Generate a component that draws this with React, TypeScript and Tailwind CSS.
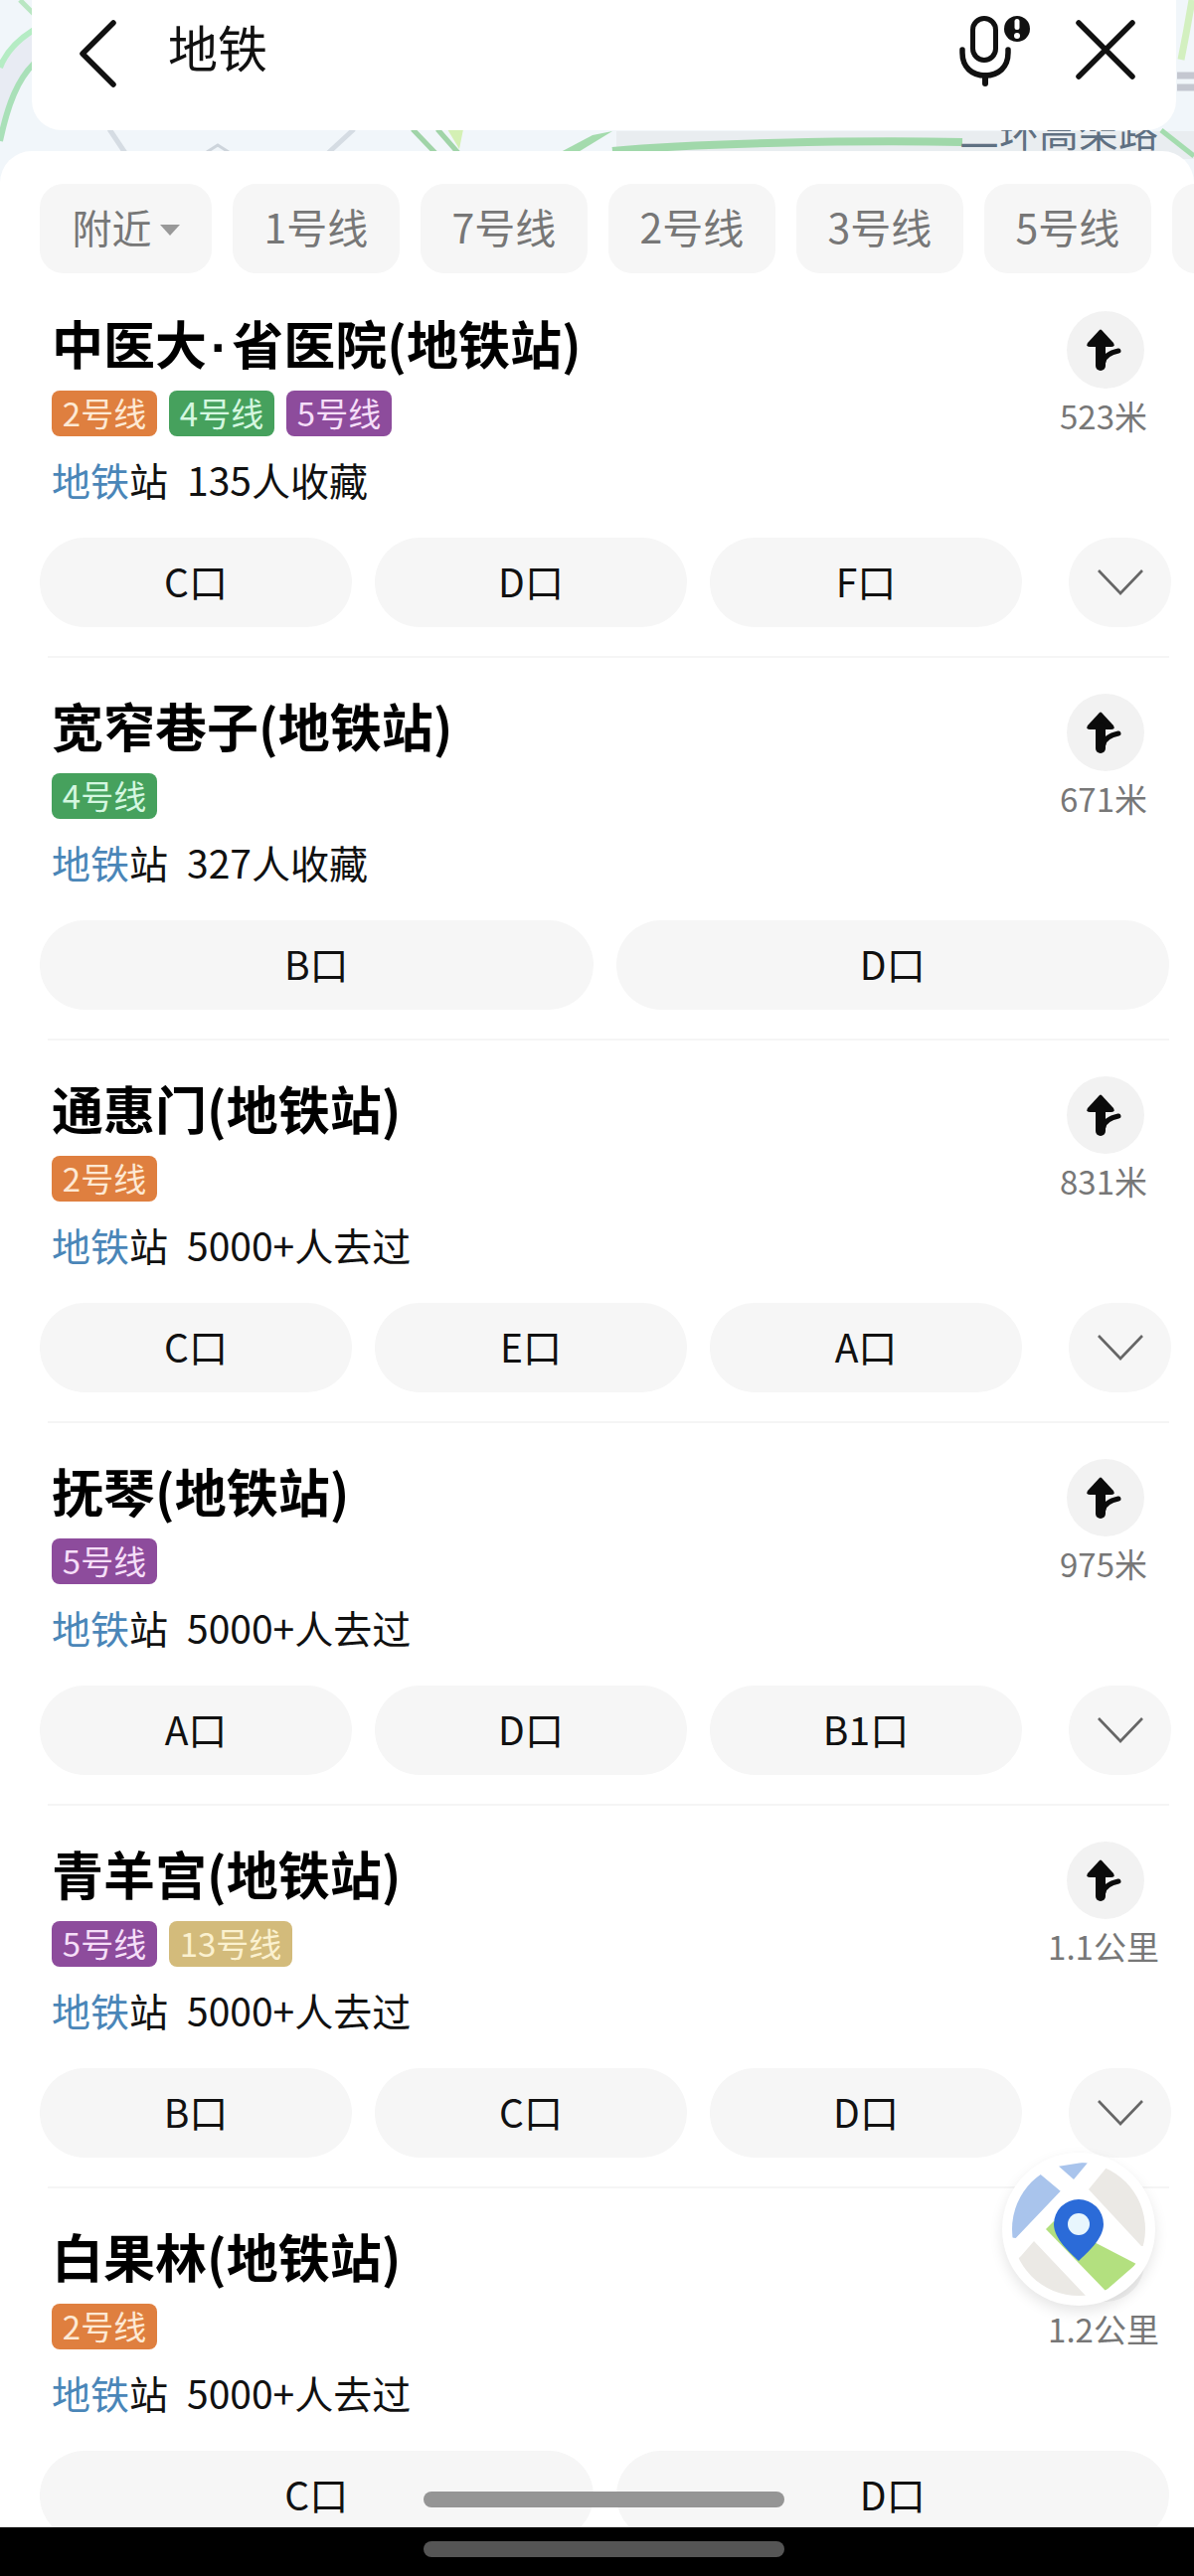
const FONT = "font-['Noto_Sans_CJK_SC','Noto_Sans',sans-serif]";

const LINE: Record<string, string> = {
  "2号线": "bg-[#df7f3f] text-[#fde9d4]",
  "4号线": "bg-[#46a15d] text-[#d4f7e0]",
  "5号线": "bg-[#8d4c9c] text-[#f5def8]",
  "13号线": "bg-[#d3bb7b] text-[#fbf1cf]",
};

type Station = {
  name: string;
  lines: string[];
  meta: string;
  dist: string;
  exits: string[];
  more: boolean;
};

const STATIONS: Station[] = [
  { name: "中医大·省医院(地铁站)", lines: ["2号线", "4号线", "5号线"], meta: "135人收藏", dist: "523米", exits: ["C口", "D口", "F口"], more: true },
  { name: "宽窄巷子(地铁站)", lines: ["4号线"], meta: "327人收藏", dist: "671米", exits: ["B口", "D口"], more: false },
  { name: "通惠门(地铁站)", lines: ["2号线"], meta: "5000+人去过", dist: "831米", exits: ["C口", "E口", "A口"], more: true },
  { name: "抚琴(地铁站)", lines: ["5号线"], meta: "5000+人去过", dist: "975米", exits: ["A口", "D口", "B1口"], more: true },
  { name: "青羊宫(地铁站)", lines: ["5号线", "13号线"], meta: "5000+人去过", dist: "1.1公里", exits: ["B口", "C口", "D口"], more: true },
  { name: "白果林(地铁站)", lines: ["2号线"], meta: "5000+人去过", dist: "1.2公里", exits: ["C口", "D口"], more: false },
];

function MapBackdrop() {
  return (
    <svg className="absolute left-0 top-0" width="1201" height="200" viewBox="0 0 1201 200" fill="none">
      <rect width="1201" height="200" fill="#f1f6fa" />
      <path d="M0 65 L33 30 V65 L15 90 L0 140Z" fill="#e8ebf3" />
      <path d="M620 132 H1201 V160 H620Z" fill="#e9edf0" />
      <path d="M20 0 L34 14" stroke="#b9e6c2" strokeWidth="5" />
      <path d="M34 30 C18 40 6 52 0 68" stroke="#b5ecc4" strokeWidth="6" />
      <path d="M34 64 C18 80 8 104 0 142" stroke="#a9e0b8" strokeWidth="6" />
      <path d="M110 130 L126 154 M356 130 L330 154" stroke="#d5dce3" strokeWidth="5" />
      <path d="M208 153 L219 146 L230 153" stroke="#cdd4db" strokeWidth="3" />
      <path d="M415 130 L438 154 M440 130 L461 154" stroke="#a0d4a8" strokeWidth="5" />
      <path d="M450 130 L466 130 L462 150Z" fill="#d4f0b4" />
      <path d="M616 132 L596 136 L562 154 L580 154 Z" fill="#a4dbad" />
      <path d="M616 152 C700 144 860 141 968 143" stroke="#a0d8aa" strokeWidth="8" />
      <path d="M1168 131 L1201 157" stroke="#a4dcae" strokeWidth="5" />
      <path d="M1188 60 C1192 40 1196 18 1199 0" stroke="#d3f0c0" strokeWidth="7" />
      <path d="M1184 76 H1201 M1184 88 H1201" stroke="#c4c7d0" strokeWidth="7" />
    </svg>
  );
}

function MicIcon() {
  return (
    <svg width="72" height="76" viewBox="0 0 72 76" fill="none">
      <rect x="13.5" y="6.5" width="23" height="42" rx="11.5" stroke="#111" strokeWidth="5" />
      <path d="M3 38 V41 C3 56 13 64 26 64 C39 64 49 56 49 41 V38" stroke="#111" strokeWidth="5.5" strokeLinecap="round" />
      <path d="M26 64 V72" stroke="#111" strokeWidth="6" strokeLinecap="round" />
      <circle cx="58" cy="17" r="13" fill="#111" />
      <rect x="55.5" y="7" width="5" height="11" rx="2.5" fill="#fff" />
      <circle cx="58" cy="24" r="3" fill="#fff" />
    </svg>
  );
}

function TurnIcon() {
  return (
    <svg width="36" height="44" viewBox="0 0 36 44" fill="none" className="-ml-[3px]">
      <path d="M13 2 Q14 1 15 2 L27 15 Q29 19 25 19 H3 Q-1 19 1 15 Z" fill="#0b0b0b" />
      <path d="M14 17 V38" stroke="#0b0b0b" strokeWidth="10" strokeLinecap="round" />
      <path d="M17 34 C18 28 23 25 32 23" stroke="#0b0b0b" strokeWidth="5" strokeLinecap="round" />
    </svg>
  );
}

function Chevron() {
  return (
    <svg width="48" height="28" viewBox="0 0 48 28" fill="none">
      <path d="M2 2 L24 25 L46 2" stroke="#666" strokeWidth="2.6" />
    </svg>
  );
}

function MapFab() {
  return (
    <div className="absolute left-[1008px] top-[2166px] flex h-[154px] w-[154px] items-center justify-center rounded-full bg-white shadow-[0_6px_14px_rgba(0,0,0,0.10)]">
      <svg width="136" height="136" viewBox="0 0 136 136">
        <defs>
          <clipPath id="fab-clip">
            <circle cx="68" cy="68" r="67" />
          </clipPath>
        </defs>
        <g clipPath="url(#fab-clip)">
          <path d="M-2 76 L29.7 13 L49.7 29.7 L4.7 77 Z M-2 76 L0 0 L30 0 L29.7 13 Z" fill="#a9c4ec" />
          <path d="M48 4.7 L78 0 L63 18 Z" fill="#a9c4ec" />
          <path d="M78 28 L96 6 L140 20 L140 85 L131 85 Z" fill="#ebe9e5" />
          <path d="M10 95 L23 80 L76 136 L16 140 L-7 111 Z" fill="#ebe9e5" />
          <path d="M35 68 L43 60 L126 103 L95 130 Z" fill="#b3e07f" />
        </g>
        <path d="M68 100 C60 92 43 78 43 63 A25 25 0 0 1 93 63 C93 78 76 92 68 100Z" fill="#2b6bd8" />
        <circle cx="68" cy="63" r="11" fill="#e8f6fd" />
      </svg>
    </div>
  );
}

function Title({ name }: { name: string }) {
  const parts = name.split("·");
  if (parts.length === 1) return <>{name}</>;
  return (
    <>
      {parts[0]}
      <span className="mx-[4px] font-['Liberation_Sans'] leading-none">·</span>
      {parts[1]}
    </>
  );
}

function StationRow({ s }: { s: Station }) {
  return (
    <div className="relative flex h-[385px] shrink-0 flex-col pl-[52px]">
      <div className="absolute right-[50px] top-[38px] flex h-[78px] w-[78px] items-center justify-center rounded-full bg-[#f2f2f2]">
        <TurnIcon />
      </div>
      <div className="absolute right-[16px] top-[118px] w-[150px] text-center text-[33px] leading-[50px] text-[#777]">{s.dist}</div>
      <div className="mt-[35px] h-[70px] overflow-visible text-[52px] font-bold leading-[70px] text-black">
        <Title name={s.name} />
      </div>
      <div className="mt-[13px] flex gap-[12px]">
        {s.lines.map((l) => (
          <span key={l} className={`flex h-[46px] items-center justify-center rounded-[8px] pb-[2px] text-[33px] leading-none ${l === "13号线" ? "w-[124px]" : "w-[106px]"} ${LINE[l]}`}>
            {l}
          </span>
        ))}
      </div>
      <div className="mt-[15px] text-[39px] leading-[56px] text-[#111]">
        <span className="text-[#4a86b8]">地铁</span>站<span className="ml-[19px]">{s.meta}</span>
      </div>
      <div className="-ml-[12px] mt-[31px] flex gap-[23px] pr-[25px]">
        {s.exits.map((e) => (
          <div key={e} className={`flex h-[90px] items-center justify-center rounded-[45px] bg-[#f6f6f6] pb-[3px] text-[39px] text-[#111] ${s.more ? "w-[314px] shrink-0" : "flex-1"}`}>
            {e}
          </div>
        ))}
        {s.more && (
          <div className="ml-[24px] flex h-[90px] w-[103px] shrink-0 items-center justify-center rounded-full bg-[#f6f6f6]">
            <Chevron />
          </div>
        )}
      </div>
      <div className="-mb-[2px] -ml-[4px] mr-[25px] mt-auto border-b-2 border-[#f5f5f5]" />
    </div>
  );
}

export default function App() {
  return (
    <div className={`relative flex h-[2592px] w-[1201px] flex-col overflow-hidden bg-black ${FONT}`}>
      <MapBackdrop />
      <div className="absolute left-[965px] top-[106px] text-[40px] leading-[50px] text-[#5f7082]">二环高架路</div>

      <header className="relative mx-[32px] flex h-[131px] w-[1151px] shrink-0 items-start rounded-b-[30px] bg-white pt-[16px] pr-[40px]">
        <svg className="ml-[46px] mt-[4px]" width="40" height="68" viewBox="0 0 40 68" fill="none">
          <path d="M36 3 L5 34 L36 65" stroke="#111" strokeWidth="5.5" strokeLinecap="round" strokeLinejoin="round" />
        </svg>
        <div className="ml-[51px] -mt-[3px] text-[50px] leading-[66px] text-[#111]">地铁</div>
        <div className="ml-auto -mt-[4px]">
          <MicIcon />
        </div>
        <svg className="ml-[44px] mt-[3px]" width="62" height="62" viewBox="0 0 62 62" fill="none">
          <path d="M4 4 L58 58 M58 4 L4 58" stroke="#111" strokeWidth="5.5" strokeLinecap="round" />
        </svg>
      </header>

      <main className="relative mt-[21px] flex min-h-0 flex-1 flex-col overflow-hidden rounded-t-[32px] bg-white">
        <div className="mt-[33px] flex shrink-0 gap-[21px] pl-[40px]">
          <div className="flex h-[90px] w-[173px] shrink-0 items-center justify-center rounded-[24px] bg-[#f6f6f6] pb-[4px] text-[40px] text-[#777]">
            附近
            <span className="ml-[8px] mt-[6px] h-0 w-0 border-x-[10px] border-t-[11px] border-x-transparent border-t-[#999]" />
          </div>
          {["1号线", "7号线", "2号线", "3号线", "5号线"].map((t) => (
            <div key={t} className="flex h-[90px] w-[168px] shrink-0 items-center justify-center rounded-[24px] bg-[#f6f6f6] pb-[4px] text-[41px] text-[#777]">
              {t}
            </div>
          ))}
          <div className="h-[90px] w-[168px] shrink-0 rounded-[24px] bg-[#f6f6f6]" />
        </div>
        <div className="flex flex-col">
          {STATIONS.map((s) => (
            <StationRow key={s.name} s={s} />
          ))}
        </div>
      </main>

      <footer className="relative flex h-[49px] shrink-0 items-start justify-center bg-black pl-[14px] pt-[14px]">
        <div className="h-[16px] w-[363px] rounded-full bg-[#555]" />
      </footer>

      <div className="absolute left-[426px] top-[2507px] h-[16px] w-[363px] rounded-full bg-[#959595]" />
      <MapFab />
    </div>
  );
}
